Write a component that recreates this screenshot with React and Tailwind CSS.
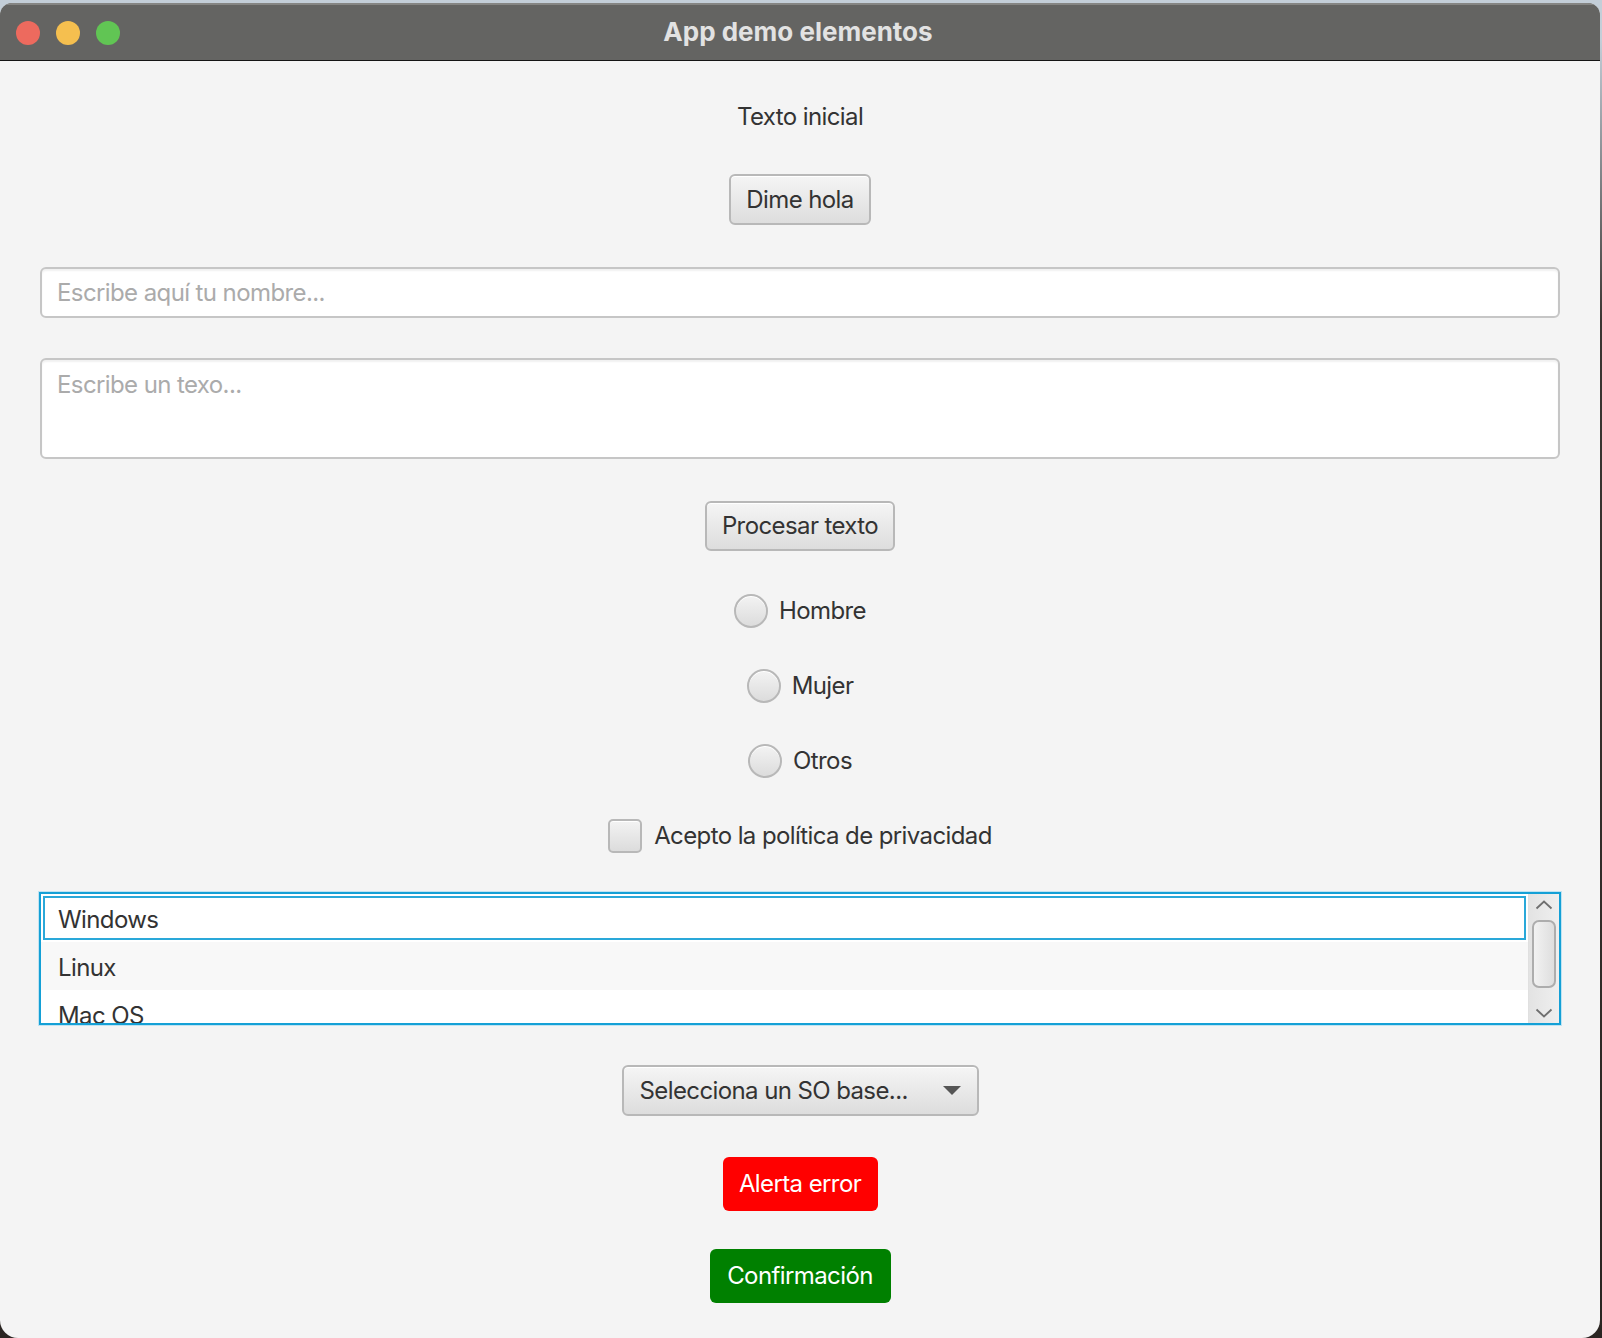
export default function App() {
  const btn =
    "flex items-center justify-center rounded-[6px] border-2 border-[#b8b8b8] bg-gradient-to-b from-[#f5f5f5] to-[#dddddd] text-[#333333] shadow-[inset_0_1px_0_#ffffff]";
  const radio =
    "w-[34px] h-[34px] rounded-full border-2 border-[#b8b8b8] bg-gradient-to-b from-[#f3f3f3] to-[#dcdcdc] shadow-[inset_0_1px_0_#ffffff]";
  return (
    <div className="w-[1602px] h-[1338px] overflow-hidden bg-[linear-gradient(to_bottom,#c3ced8_0px,#c3ced8_40px,#3b3532_320px,#2a2522_100%)] font-['Inter',sans-serif] text-[24px] tracking-[-0.6px]">
      <div className="w-[1600px] h-[1335px] mt-[3px] rounded-t-[12px] rounded-b-[18px] overflow-hidden bg-[#f4f4f4] flex flex-col">
        {/* Title bar */}
        <div className="h-[58px] shrink-0 bg-[#646462] border-t-2 border-t-[#858583] border-b border-b-[#151515] grid grid-cols-[1fr_auto_1fr] items-center">
          <div className="flex items-center gap-[16px] pl-[16px]">
            <div className="w-[24px] h-[24px] rounded-full bg-[#ed6a5e]" />
            <div className="w-[24px] h-[24px] rounded-full bg-[#f5bf4f]" />
            <div className="w-[24px] h-[24px] rounded-full bg-[#61c554]" />
          </div>
          <div className="text-[26px] font-bold text-[#e2e2e2] tracking-[0px] pr-[4px] -mt-[2px]">App demo elementos</div>
          <div />
        </div>

        {/* Content */}
        <div className="flex flex-col items-center px-[40px] pt-[40px] text-[#333333]">
          <div className="h-[32px] leading-[32px]">Texto inicial</div>

          <div className={`${btn} mt-[41px] w-[142px] h-[51px]`}>Dime hola</div>

          <div className="mt-[42px] w-full h-[51px] rounded-[6px] border-2 border-[#c6c6c6] bg-white shadow-[inset_0_2px_2px_rgba(0,0,0,0.06)] flex items-center pl-[15px] text-[#ababab]">
            Escribe aquí tu nombre...
          </div>

          <div className="mt-[40px] w-full h-[101px] rounded-[6px] border-2 border-[#c6c6c6] bg-white shadow-[inset_0_2px_2px_rgba(0,0,0,0.06)] pl-[15px] pt-[9px] leading-[32px] text-[#ababab]">
            Escribe un texo...
          </div>

          <div className={`${btn} mt-[42px] w-[190px] h-[50px]`}>Procesar texto</div>

          <div className="mt-[42px] h-[35px] flex items-center gap-[11px]">
            <div className={radio} />
            <span>Hombre</span>
          </div>
          <div className="mt-[40px] h-[35px] flex items-center gap-[11px]">
            <div className={radio} />
            <span>Mujer</span>
          </div>
          <div className="mt-[40px] h-[35px] flex items-center gap-[11px]">
            <div className={radio} />
            <span>Otros</span>
          </div>

          <div className="mt-[40px] h-[35px] flex items-center gap-[12px]">
            <div className="w-[34px] h-[34px] rounded-[5px] border-2 border-[#b8b8b8] bg-gradient-to-b from-[#f3f3f3] to-[#dcdcdc] shadow-[inset_0_1px_0_#ffffff]" />
            <span>Acepto la política de privacidad</span>
          </div>

          {/* List */}
          <div className="mt-[39px] w-[1522px] h-[133px] border-2 border-[#14a0d6] shadow-[0_0_0_1px_#bfe3f2] bg-white flex overflow-hidden">
            <div className="flex-1 flex flex-col">
              <div className="h-[48px] shrink-0 p-[2px] bg-white">
                <div className="h-full border-2 border-[#2aa8d9] flex items-center pl-[13px] pt-[4px]">Windows</div>
              </div>
              <div className="h-[48px] shrink-0 bg-[#f8f8f8] flex items-center pl-[17px] pt-[4px]">Linux</div>
              <div className="h-[48px] shrink-0 bg-white flex items-center pl-[17px] pt-[4px]">Mac OS</div>
            </div>
            <div className="w-[31px] shrink-0 bg-gradient-to-r from-[#e3e3e3] to-[#efefef] border-l border-l-[#e0e0e0] flex flex-col items-center">
              <svg width="18" height="10" viewBox="0 0 18 10" className="mt-[6px] shrink-0">
                <path d="M1.5 8.5 L9 1.5 L16.5 8.5" fill="none" stroke="#6f6f6f" strokeWidth="1.8" />
              </svg>
              <div className="mt-[10px] shrink-0 w-[24px] h-[68px] rounded-[7px] border-2 border-[#adadad] bg-gradient-to-r from-[#f2f2f2] to-[#dedede]" />
              <svg width="18" height="10" viewBox="0 0 18 10" className="mt-[20px] shrink-0">
                <path d="M1.5 1.5 L9 8.5 L16.5 1.5" fill="none" stroke="#6f6f6f" strokeWidth="1.8" />
              </svg>
            </div>
          </div>

          {/* Combo */}
          <div className={`${btn} mt-[40px] w-[357px] h-[51px] !justify-between pl-[16px] pr-[16px]`}>
            <span>Selecciona un SO base...</span>
            <svg width="18" height="10" viewBox="0 0 18 10">
              <polygon points="0,0 18,0 9,9" fill="#555555" />
            </svg>
          </div>

          <div className="mt-[41px] w-[155px] h-[54px] rounded-[6px] bg-[#ff0000] text-white flex items-center justify-center">
            Alerta error
          </div>
          <div className="mt-[38px] w-[181px] h-[54px] rounded-[6px] bg-[#008000] text-white flex items-center justify-center">
            Confirmación
          </div>
        </div>
      </div>
    </div>
  );
}
